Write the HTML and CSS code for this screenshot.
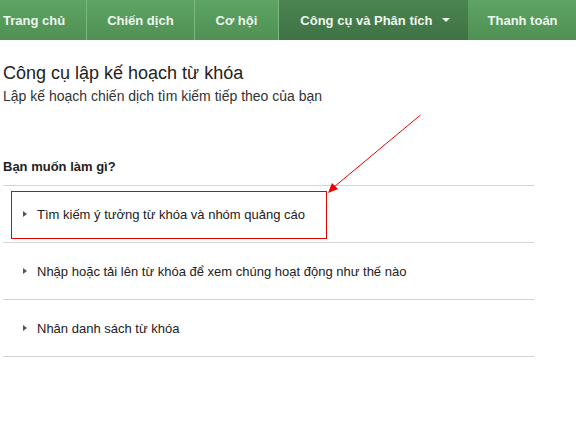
FILE: index.html
```html
<!DOCTYPE html>
<html lang="vi">
<head>
<meta charset="utf-8">
<link rel="stylesheet" href="styles.css">
</head>
<body>
<nav class="nav">
  <a class="tab first">Trang chủ</a>
  <a class="tab">Chiến dịch</a>
  <a class="tab mid">Cơ hội</a>
  <a class="tab active">Công cụ và Phân tích <span class="caret"></span></a>
  <a class="tab last">Thanh toán</a>
</nav>
<main class="content">
  <h1 class="title">Công cụ lập kế hoạch từ khóa</h1>
  <p class="subtitle">Lập kế hoạch chiến dịch tìm kiếm tiếp theo của bạn</p>
  <h2 class="question">Bạn muốn làm gì?</h2>
  <ul class="options">
    <li class="option"><span class="tri"></span>Tìm kiếm ý tưởng từ khóa và nhóm quảng cáo</li>
    <li class="option"><span class="tri"></span>Nhập hoặc tải lên từ khóa để xem chúng hoạt động như thế nào</li>
    <li class="option"><span class="tri"></span>Nhân danh sách từ khóa</li>
  </ul>
</main>
<svg class="annot" width="576" height="435" viewBox="0 0 576 435">
  <rect x="11.5" y="191.5" width="315" height="47" fill="none" stroke="#e00000" stroke-width="1"/>
  <line x1="420.5" y1="115" x2="334" y2="187" stroke="#ee0000" stroke-width="1"/>
  <polygon points="328,193 332,183 338,189" fill="#ee0000"/>
</svg>
</body>
</html>
```
FILE: styles.css
```css
html, body {
  margin: 0;
  padding: 0;
  background: #fff;
  font-family: "Liberation Sans", Arial, sans-serif;
  color: #222;
}
.nav {
  display: flex;
  height: 40px;
  background: linear-gradient(#5ea463, #4f9154);
}
.tab {
  display: flex;
  align-items: center;
  padding: 0 20px;
  font-size: 13px;
  font-weight: bold;
  color: #eef6ee;
  border-right: 1px solid #7cb880;
  white-space: nowrap;
}
.tab.first {
  padding: 0 21px 0 3px;
}
.tab.mid {
  padding: 0 21px;
}
.tab.active {
  background: linear-gradient(#4b8550, #3f7244);
  border-right: none;
  padding: 0 18px 0 21px;
}
.tab.last {
  border-right: none;
  flex: 1;
}
.caret {
  display: inline-block;
  width: 0;
  height: 0;
  margin-left: 9px;
  border-left: 4px solid transparent;
  border-right: 4px solid transparent;
  border-top: 4px solid #eef6ee;
}
.content {
  padding: 0 42px 0 3px;
}
.title {
  margin: 22px 0 0;
  font-size: 18px;
  font-weight: normal;
  line-height: 22px;
  color: #222;
}
.subtitle {
  margin: 4px 0 0;
  font-size: 14px;
  line-height: 17px;
  color: #333;
}
.question {
  margin: 53px 0 0;
  font-size: 13px;
  font-weight: bold;
  line-height: 17px;
  color: #222;
}
.options {
  list-style: none;
  margin: 10px 0 0;
  padding: 0;
  border-top: 1px solid #d4d4d4;
}
.option {
  display: flex;
  align-items: center;
  height: 56px;
  border-bottom: 1px solid #d4d4d4;
  font-size: 13px;
  color: #222;
  padding-left: 20px;
}
.tri {
  display: inline-block;
  width: 0;
  height: 0;
  border-top: 3.5px solid transparent;
  border-bottom: 3.5px solid transparent;
  border-left: 4px solid #555;
  margin-right: 10px;
}
.annot {
  position: absolute;
  left: 0;
  top: 0;
  pointer-events: none;
}
```
